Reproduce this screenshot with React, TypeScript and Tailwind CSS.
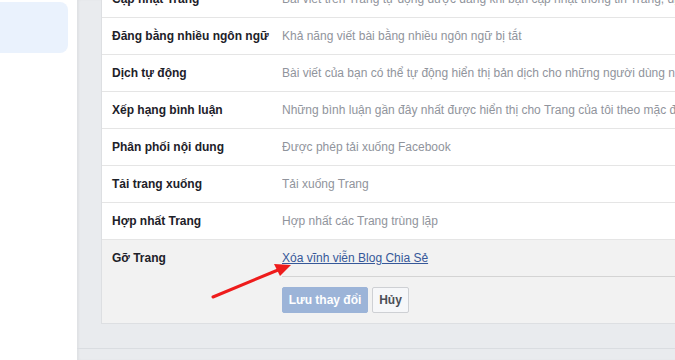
import React from 'react';

const rows = [
  { label: 'Cập nhật Trang', desc: 'Bài viết trên Trang tự động được đăng khi bạn cập nhật thông tin Trang, địa chỉ, số điện thoại' },
  { label: 'Đăng bằng nhiều ngôn ngữ', desc: 'Khả năng viết bài bằng nhiều ngôn ngữ bị tắt' },
  { label: 'Dịch tự động', desc: 'Bài viết của bạn có thể tự động hiển thị bản dịch cho những người dùng nói ngôn ngữ khác' },
  { label: 'Xếp hạng bình luận', desc: 'Những bình luận gần đây nhất được hiển thị cho Trang của tôi theo mặc định' },
  { label: 'Phân phối nội dung', desc: 'Được phép tải xuống Facebook' },
  { label: 'Tải trang xuống', desc: 'Tải xuống Trang' },
  { label: 'Hợp nhất Trang', desc: 'Hợp nhất các Trang trùng lặp' },
];

const App: React.FC = () => {
  return (
    <div
      className="relative flex w-[675px] h-[360px] overflow-hidden bg-white text-[12px]"
      style={{ fontFamily: '"Liberation Sans", Arial, sans-serif' }}
    >
      <aside className="w-[77px] shrink-0 bg-white pt-[2px]">
        <div className="w-[68px] h-[51px] rounded-r-[8px] bg-[#eaf2fd]" />
      </aside>

      <main className="flex-1 min-w-0 flex flex-col bg-[#e9ebee] shadow-[inset_2px_0_2px_rgba(0,0,0,0.04)]">
        <div className="pl-[24px] -mt-[20px]">
          <div className="w-[700px] bg-white border border-[#dddfe2]">
            {rows.map((r) => (
              <div key={r.label} className="flex items-center h-[37px] border-b border-[#e5e5e5] px-[10px] whitespace-nowrap">
                <div className="w-[170px] shrink-0 font-bold text-[#1d2129]">{r.label}</div>
                <div className="text-[#90949c] overflow-hidden">{r.desc}</div>
              </div>
            ))}
            <div className="flex bg-[#f2f2f2] px-[10px] pt-[9px] pb-[10px]">
              <div className="w-[170px] shrink-0 font-bold text-[#1d2129]">Gỡ Trang</div>
              <div className="flex-1">
                <div className="pb-[9px] border-b border-[#d4d4d4]">
                  <a href="#" className="text-[#365899] underline">Xóa vĩnh viễn Blog Chia Sẻ</a>
                </div>
                <div className="flex gap-[4px] pt-[10px]">
                  <button type="button" className="h-[26px] w-[86px] rounded-[2px] bg-[#9cb4d8] text-white font-bold border border-[#9cb4d8]">
                    Lưu thay đổi
                  </button>
                  <button type="button" className="h-[26px] w-[37px] rounded-[2px] bg-[#f6f7f9] text-[#4b4f56] font-bold border border-[#ced0d4]">
                    Hủy
                  </button>
                </div>
              </div>
            </div>
          </div>
        </div>
        <div className="mt-[24px] border-t border-[#dadde1]" />
      </main>

      <svg className="absolute left-0 top-0 pointer-events-none" width="675" height="360">
        <line x1="213" y1="297" x2="278" y2="270" stroke="#ee1c1c" strokeWidth="3" strokeLinecap="round" />
        <polygon points="291,265 274,264 280,276" fill="#ee1c1c" />
      </svg>
    </div>
  );
};

export default App;
